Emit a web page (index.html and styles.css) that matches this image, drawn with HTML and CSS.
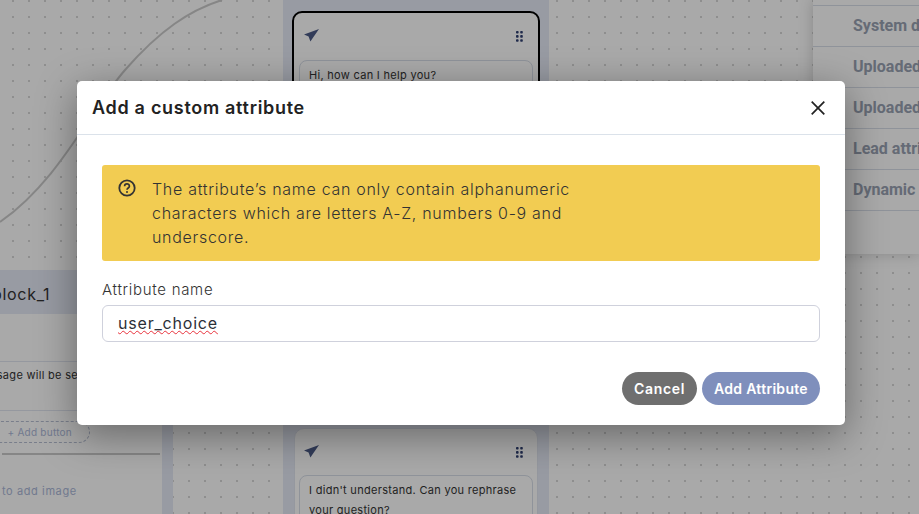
FILE: index.html
```html
<!DOCTYPE html>
<html lang="en">
<head>
    <meta charset="UTF-8">
    <meta name="viewport" content="width=device-width, initial-scale=1.0">
    <title>Add a custom attribute</title>
    <link rel="stylesheet" href="styles.css">
</head>
<body>
    <div class="canvas">
        <svg class="edge" width="300" height="240" viewBox="0 0 300 240">
            <path d="M0 222 C 60 180, 90 110, 125 70 C 160 30, 190 10, 222 0" fill="none" stroke="#c8c8c8" stroke-width="2"/>
        </svg>

        <div class="column column-main"></div>
        <div class="column column-left"></div>

        <div class="node node-top">
            <div class="node-head">
                <svg class="send" width="15" height="13" viewBox="0 0 15 13"><path d="M15 0 L0 5.6 L4.6 7.6 L6.4 12.6 L8.6 9.2 Z" fill="#4b5a85"/></svg>
                <svg class="grip" width="7" height="11" viewBox="0 0 7 11"><g fill="#2f3f70"><rect x="0" y="0" width="2.6" height="2.6" rx="0.8"/><rect x="4.2" y="0" width="2.6" height="2.6" rx="0.8"/><rect x="0" y="4.1" width="2.6" height="2.6" rx="0.8"/><rect x="4.2" y="4.1" width="2.6" height="2.6" rx="0.8"/><rect x="0" y="8.2" width="2.6" height="2.6" rx="0.8"/><rect x="4.2" y="8.2" width="2.6" height="2.6" rx="0.8"/></g></svg>
            </div>
            <div class="bubble">Hi, how can I help you?</div>
        </div>

        <div class="node node-bottom">
            <div class="node-head">
                <svg class="send" width="15" height="13" viewBox="0 0 15 13"><path d="M15 0 L0 5.6 L4.6 7.6 L6.4 12.6 L8.6 9.2 Z" fill="#4b5a85"/></svg>
                <svg class="grip" width="7" height="11" viewBox="0 0 7 11"><g fill="#2f3f70"><rect x="0" y="0" width="2.6" height="2.6" rx="0.8"/><rect x="4.2" y="0" width="2.6" height="2.6" rx="0.8"/><rect x="0" y="4.1" width="2.6" height="2.6" rx="0.8"/><rect x="4.2" y="4.1" width="2.6" height="2.6" rx="0.8"/><rect x="0" y="8.2" width="2.6" height="2.6" rx="0.8"/><rect x="4.2" y="8.2" width="2.6" height="2.6" rx="0.8"/></g></svg>
            </div>
            <div class="bubble">I didn't understand. Can you rephrase your question?</div>
        </div>

        <div class="block">
            <div class="block-title">block_1</div>
            <div class="block-body">
                <div class="block-message">message will be sent</div>
                <div class="add-button">+ Add button</div>
                <div class="block-image">to add image</div>
            </div>
        </div>

        <div class="attrs">
            <div class="attr-row">System defined</div>
            <div class="attr-row">Uploaded file</div>
            <div class="attr-row">Uploaded data</div>
            <div class="attr-row">Lead attributes</div>
            <div class="attr-row">Dynamic data</div>
        </div>
    </div>

    <div class="overlay"></div>

    <div class="modal">
        <div class="modal-header">
            <h2 class="modal-title">Add a custom attribute</h2>
            <svg class="close" width="14" height="14" viewBox="0 0 14 14"><path d="M0.7 0.7 L13.3 13.3 M13.3 0.7 L0.7 13.3" stroke="#222" stroke-width="1.7" fill="none"/></svg>
        </div>
        <div class="modal-body">
            <div class="notice">
                <svg class="notice-icon" width="18" height="18" viewBox="0 0 18 18">
                    <circle cx="9" cy="9" r="7.7" fill="none" stroke="#333" stroke-width="1.8"/>
                    <path d="M6.6 7.2 C6.6 4.2 11.4 4.2 11.4 7.2 C11.4 9 9 9 9 10.8" fill="none" stroke="#333" stroke-width="1.7"/>
                    <circle cx="9" cy="13" r="1" fill="#333"/>
                </svg>
                <p class="notice-text">The attribute’s name can only contain alphanumeric<br>characters which are letters A-Z, numbers 0-9 and<br>underscore.</p>
            </div>
            <div class="field-label">Attribute name</div>
            <div class="field-input"><span class="misspelled">user_choice</span></div>
            <div class="actions">
                <button class="btn btn-cancel">Cancel</button>
                <button class="btn btn-add">Add Attribute</button>
            </div>
        </div>
    </div>
</body>
</html>
```
FILE: styles.css
```css
* {
    box-sizing: border-box;
}

html, body {
    margin: 0;
    height: 100%;
    overflow: hidden;
}

body {
    position: relative;
    width: 919px;
    height: 514px;
    font-family: "Inter", "Noto Sans", sans-serif;
}

/* diagram behind the dialog */
.canvas {
    position: absolute;
    inset: 0;
    overflow: hidden;
    background-color: #fcfcfc;
    background-image: radial-gradient(circle, #d4d4d4 0.8px, transparent 1.1px);
    background-size: 16px 16px;
    background-position: 5px 9px;
}

.edge {
    position: absolute;
    left: 0;
    top: 0;
}

.column {
    position: absolute;
    background: #e3e7f3;
}

.column-main {
    left: 283px;
    top: 0;
    width: 266px;
    height: 514px;
}

.column-left {
    left: 0;
    top: 270px;
    width: 173px;
    height: 244px;
}

.node {
    position: absolute;
    background: #fcfcfc;
    border-radius: 10px;
}

.node-top {
    top: 11px;
    left: 292px;
    width: 248px;
    height: 120px;
    border: 2px solid #000;
    padding: 0 5px;
}

.node-bottom {
    top: 428px;
    left: 294px;
    width: 244px;
    height: 110px;
    border: 1px solid #dfe3ee;
    padding: 0 4px;
}

.node-head {
    display: flex;
    justify-content: space-between;
    align-items: center;
    height: 47px;
    padding: 0 10px 0 5px;
}

.node-bottom .node-head {
    height: 46px;
}

.send {
    margin-top: -2px;
}

.bubble {
    border: 1px solid #d5dbe6;
    border-radius: 8px;
    padding: 4px 9px;
    font-size: 11px;
    letter-spacing: 0.3px;
    line-height: 20px;
    color: #333;
}

.block {
    position: absolute;
    left: 0;
    top: 270px;
    width: 162px;
    height: 244px;
    background: #fcfcfc;
}

.block-title {
    height: 44px;
    margin-left: -8px;
    background: #e3e7f3;
    font-size: 16px;
    letter-spacing: 0.7px;
    line-height: 48px;
    color: #333;
}

.block-body {
    position: relative;
    height: 200px;
}

.block-message {
    position: absolute;
    left: -26px;
    top: 47px;
    width: 200px;
    height: 50px;
    padding-left: 0;
    border-top: 1px solid #dfe3ee;
    border-bottom: 1px solid #dfe3ee;
    padding-top: 6px;
    font-size: 11px;
    letter-spacing: 0.3px;
    color: #333;
    white-space: nowrap;
}

.add-button {
    position: absolute;
    left: -20px;
    top: 107px;
    width: 110px;
    height: 22px;
    border: 1px dashed #b5bdd0;
    border-radius: 11px;
    font-size: 10px;
    letter-spacing: 0.25px;
    line-height: 20px;
    text-align: right;
    padding-right: 17px;
    color: #a9b5d5;
}

.block-image {
    position: absolute;
    left: 2px;
    top: 139px;
    width: 158px;
    border-top: 2px solid #c8c8c8;
    padding-top: 29px;
    font-size: 11px;
    letter-spacing: 0.6px;
    color: #a9b5d5;
}

.attrs {
    position: absolute;
    left: 813px;
    top: 0;
    width: 106px;
    height: 254px;
    padding-top: 5px;
    background: #fcfcfc;
    box-shadow: 0 0 14px rgba(0, 0, 0, 0.2);
}

.attr-row {
    height: 41px;
    padding-left: 40px;
    border-top: 1px solid #d6dbe6;
    font-family: "Roboto", sans-serif;
    font-weight: 700;
    font-size: 16px;
    line-height: 39px;
    color: #97a0b0;
    white-space: nowrap;
    overflow: hidden;
}

.attr-row:last-child {
    height: 42px;
    border-bottom: 1px solid #d6dbe6;
}

.overlay {
    position: absolute;
    inset: 0;
    background: rgba(0, 0, 0, 0.33);
}

/* dialog */
.modal {
    position: absolute;
    left: 77px;
    top: 81px;
    width: 768px;
    height: 344px;
    background: #fff;
    border-radius: 5px;
    box-shadow: 0 10px 40px rgba(0, 0, 0, 0.4);
}

.modal-header {
    display: flex;
    justify-content: space-between;
    align-items: center;
    height: 54px;
    padding: 0 20px 0 15px;
    border-bottom: 1px solid #dbe2ea;
}

.modal-title {
    margin: 0;
    font-size: 18px;
    font-weight: 600;
    letter-spacing: 0.7px;
    color: #222;
}

.modal-body {
    padding: 30px 25px 0;
}

.notice {
    display: flex;
    gap: 16px;
    height: 96px;
    padding: 12px 16px;
    background: #f2cc52;
    border-radius: 3px;
}

.notice-icon {
    margin-top: 2px;
    flex: 0 0 auto;
}

.notice-text {
    margin: 0;
    font-size: 16px;
    font-weight: 300;
    letter-spacing: 0.7px;
    line-height: 24px;
    color: #333;
}

.field-label {
    margin-top: 18px;
    font-size: 15px;
    font-weight: 300;
    letter-spacing: 0.7px;
    line-height: 22px;
    color: #333;
}

.field-input {
    height: 37px;
    margin-top: 4px;
    padding-left: 15px;
    border: 1px solid #cfd1dc;
    border-radius: 6px;
    font-size: 16px;
    letter-spacing: 0.8px;
    line-height: 35px;
    color: #2c3038;
}

.misspelled {
    text-decoration: underline wavy #e8323c 1.4px;
    text-underline-offset: 1px;
}

.actions {
    display: flex;
    justify-content: flex-end;
    gap: 5px;
    margin-top: 30px;
}

.btn {
    height: 33px;
    padding: 0;
    border: 0;
    border-radius: 17px;
    font-family: inherit;
    font-size: 14px;
    font-weight: 600;
    color: #fff;
}

.btn-cancel {
    width: 75px;
    letter-spacing: 0.7px;
    background: #6f6f6f;
}

.btn-add {
    width: 118px;
    letter-spacing: 0.3px;
    background: #7f8fbc;
}
```
